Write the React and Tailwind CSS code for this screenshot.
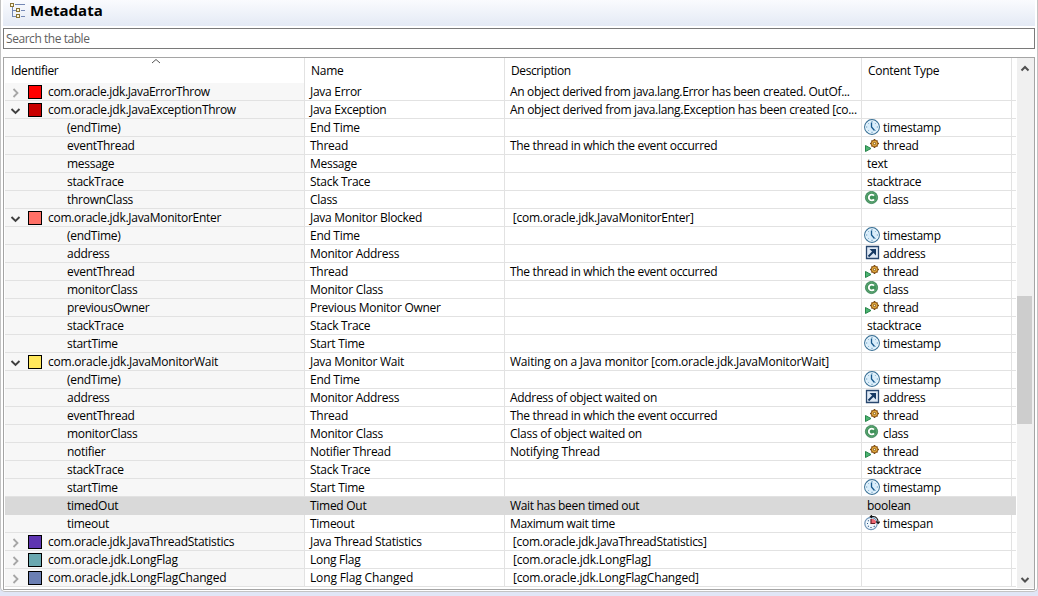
import React from 'react';

const rows = [
  { color: '#ff0000', id: 'com.oracle.jdk.JavaErrorThrow', idTracking: 'tracking-[-0.32px]', name: 'Java Error', desc: 'An object derived from java.lang.Error has been created. OutOf...', descTracking: 'tracking-[-0.34px]' },
  { color: '#c80000', open: true, id: 'com.oracle.jdk.JavaExceptionThrow', name: 'Java Exception', desc: 'An object derived from java.lang.Exception has been created [co...', descTracking: 'tracking-[-0.31px]' },
  { id: '(endTime)', name: 'End Time', type: 'timestamp' },
  { id: 'eventThread', name: 'Thread', desc: 'The thread in which the event occurred', descTracking: 'tracking-[-0.32px]', type: 'thread' },
  { id: 'message', name: 'Message', type: 'text' },
  { id: 'stackTrace', name: 'Stack Trace', type: 'stacktrace' },
  { id: 'thrownClass', name: 'Class', type: 'class' },
  { color: '#ff7066', open: true, id: 'com.oracle.jdk.JavaMonitorEnter', name: 'Java Monitor Blocked', desc: ' [com.oracle.jdk.JavaMonitorEnter]' },
  { id: '(endTime)', name: 'End Time', type: 'timestamp' },
  { id: 'address', name: 'Monitor Address', type: 'address' },
  { id: 'eventThread', name: 'Thread', desc: 'The thread in which the event occurred', descTracking: 'tracking-[-0.32px]', type: 'thread' },
  { id: 'monitorClass', name: 'Monitor Class', type: 'class' },
  { id: 'previousOwner', name: 'Previous Monitor Owner', type: 'thread' },
  { id: 'stackTrace', name: 'Stack Trace', type: 'stacktrace' },
  { id: 'startTime', name: 'Start Time', type: 'timestamp' },
  { color: '#ffe75c', open: true, id: 'com.oracle.jdk.JavaMonitorWait', idTracking: 'tracking-[-0.23px]', name: 'Java Monitor Wait', desc: 'Waiting on a Java monitor [com.oracle.jdk.JavaMonitorWait]', descTracking: 'tracking-[-0.21px]' },
  { id: '(endTime)', name: 'End Time', type: 'timestamp' },
  { id: 'address', name: 'Monitor Address', desc: 'Address of object waited on', descTracking: 'tracking-[-0.31px]', type: 'address' },
  { id: 'eventThread', name: 'Thread', desc: 'The thread in which the event occurred', descTracking: 'tracking-[-0.32px]', type: 'thread' },
  { id: 'monitorClass', name: 'Monitor Class', desc: 'Class of object waited on', type: 'class' },
  { id: 'notifier', name: 'Notifier Thread', desc: 'Notifying Thread', descTracking: 'tracking-[-0.21px]', type: 'thread' },
  { id: 'stackTrace', name: 'Stack Trace', type: 'stacktrace' },
  { id: 'startTime', name: 'Start Time', type: 'timestamp' },
  { id: 'timedOut', name: 'Timed Out', desc: 'Wait has been timed out', descTracking: 'tracking-[-0.33px]', type: 'boolean', selected: true },
  { id: 'timeout', name: 'Timeout', desc: 'Maximum wait time', descTracking: 'tracking-[-0.36px]', type: 'timespan' },
  { color: '#5e35b1', id: 'com.oracle.jdk.JavaThreadStatistics', name: 'Java Thread Statistics', desc: ' [com.oracle.jdk.JavaThreadStatistics]' },
  { color: '#6aa8b0', id: 'com.oracle.jdk.LongFlag', idTracking: 'tracking-[-0.19px]', name: 'Long Flag', desc: ' [com.oracle.jdk.LongFlag]', descTracking: 'tracking-[-0.16px]' },
  { color: '#6b7fb3', id: 'com.oracle.jdk.LongFlagChanged', idTracking: 'tracking-[-0.18px]', name: 'Long Flag Changed', nameTracking: 'tracking-[-0.14px]', desc: ' [com.oracle.jdk.LongFlagChanged]', descTracking: 'tracking-[-0.18px]' },
];

function TreeIcon() {
  return (
    <svg className="h-[18px] w-4 shrink-0" viewBox="0 0 16 18" fill="none" shapeRendering="crispEdges">
      <path d="M2.500 4v11M2.500 8.500h4M2.500 14.500h4M5 2.500h10M11 8.500h4M11 14.500h4" stroke="#7488b5" />
      <g fill="#fdf6d8" stroke="#8a7434">
        <path d="M.5 1.500h3v3h-3zM6.500 6.500h3v3h-3zM6.500 12.500h3v3h-3z" />
      </g>
    </svg>
  );
}

function ClockIcon() {
  return (
    <svg className="h-4 w-4" viewBox="0 0 16 16" fill="none">
      <circle cx="8" cy="8" r="7.400" fill="#d9edfa" stroke="#3a7095" strokeWidth="1.100" />
      <circle cx="8" cy="8" r="6.200" stroke="#f3faff" strokeWidth=".8" />
      <path d="M8 2v1.200M8 12.800V14M2 8h1.200M12.800 8H14M3.800 3.800l.8.8M11.400 11.400l.8.8M3.800 12.200l.8-.8M11.400 4.600l.8-.8" stroke="#639bc0" />
      <path d="M7.500 3.500V8l3 3.500" stroke="#17588c" strokeWidth="1.300" />
    </svg>
  );
}

function ThreadIcon() {
  return (
    <svg className="h-4 w-4" viewBox="0 0 16 16" fill="none">
      <path d="M1.500 8.500v6L7 11.500z" fill="#4cb572" stroke="#27854a" />
      <path d="M10.500 2v9M6 6.500h9M7.500 3.500l6 6M13.500 3.500l-6 6" stroke="#754713" strokeWidth="1.700" />
      <circle cx="10.500" cy="6.500" r="3.200" fill="#efb640" stroke="#80480f" strokeWidth=".9" />
      <circle cx="10.500" cy="6.500" r="1.200" fill="#fff3cf" stroke="#754713" strokeWidth=".9" />
    </svg>
  );
}

function ClassIcon() {
  return (
    <svg className="h-4 w-4" viewBox="0 0 16 16" fill="none">
      <circle cx="7.500" cy="6.500" r="6.100" fill="#3f9159" stroke="#348052" strokeWidth=".8" />
      <circle cx="7.500" cy="6.500" r="5" stroke="#7bb68a" strokeWidth=".5" />
      <path d="M10 4.700A2.900 2.900 0 1 0 10 8.300" stroke="#fff" strokeWidth="1.900" />
    </svg>
  );
}

function AddressIcon() {
  return (
    <svg className="h-4 w-4" viewBox="0 0 16 16" fill="none">
      <path d="M2.500 1.500h12v12h-12z" fill="#dfe9f5" stroke="#28476f" strokeWidth="1.300" />
      <path d="M4.500 11.500L10 6" stroke="#173963" strokeWidth="2" />
      <path d="M5.500 4H12V10.500z" fill="#173963" />
    </svg>
  );
}

function TimespanIcon() {
  return (
    <svg className="h-4 w-4" viewBox="0 0 16 16" fill="none">
      <circle cx="7" cy="8.500" r="6.200" fill="#f0f7fd" stroke="#7195b8" strokeWidth="1.200" />
      <path d="M7 8.500V4h2.500L12 6v2.500z" fill="#ee6873" />
      <path d="M7 4v4.500h4" stroke="#6b1b24" strokeWidth="1.200" />
      <path d="M3 8.500h1M7 12v1M4 5.500l.7.700M4 11.500l.7-.7M9.800 11l.8.700" stroke="#315b85" strokeWidth="1.200" />
      <path d="M6.500 1.500h3c2.800.3 4.500 2.500 4.700 6M8 .2l-1.700 1.300L8 3M12.200 6.500l2 2 1.600-2" stroke="#161616" strokeWidth="1.100" />
    </svg>
  );
}

const icons = { timestamp: ClockIcon, thread: ThreadIcon, class: ClassIcon, address: AddressIcon, timespan: TimespanIcon };

function Expander({ open }) {
  return (
    <svg className="mt-[2px] h-4 w-4 shrink-0" viewBox="0 0 16 16" fill="none">
      {open ? (
        <path d="M4.500 6l4 4 4-4" stroke="#404040" strokeWidth="1.900" />
      ) : (
        <path d="M6.500 4l4 4-4 4" stroke="#a6a6a6" strokeWidth="1.800" />
      )}
    </svg>
  );
}

function Row({ row }) {
  const Icon = icons[row.type];
  const line = row.selected ? 'border-[#d9d9d9]' : 'border-[#e2e2e2]';
  return (
    <div className={`flex h-[18px] whitespace-pre border-b leading-[18px] ${line} ${row.selected ? 'bg-[#d9d9d9]' : 'bg-white'}`}>
      <div className={`flex w-[300px] shrink-0 border-r ${line} ${row.selected ? '' : 'bg-[#f7f7f7]'}`}>
        {row.color ? (
          <div className="flex pl-[2px]">
            <Expander open={row.open} />
            <span className="ml-[5px] mt-[2px] h-[14px] w-[14px] shrink-0 border border-black" style={{ backgroundColor: row.color }} />
            <span className={`ml-[6px] ${row.idTracking || 'tracking-[-0.28px]'}`}>{row.id}</span>
          </div>
        ) : (
          <span className="pl-[62px]">{row.id}</span>
        )}
      </div>
      <div className={`w-[200px] shrink-0 border-r pl-[5px] ${line} ${row.nameTracking || 'tracking-[-0.28px]'}`}>{row.name}</div>
      <div className={`w-[357px] shrink-0 border-r pl-[5px] ${line} ${row.descTracking || 'tracking-[-0.27px]'}`}>{row.desc}</div>
      <div className={`flex w-[150px] shrink-0 border-r ${line}`}>
        {Icon ? (
          <>
            <span className="ml-[2px] h-4 w-4"><Icon /></span>
            <span className="ml-[3px]">{row.type}</span>
          </>
        ) : (
          <span className="pl-[5px]">{row.type}</span>
        )}
      </div>
    </div>
  );
}

export default function App() {
  return (
    <div className="h-[596px] w-[1038px] overflow-hidden bg-[#e1e6f6] font-['Open_Sans','Noto_Sans',sans-serif] text-[12px] tracking-[-0.28px] text-black">
      <div className="flex h-[592px] flex-col rounded-b-[5px] border-x border-b border-[#c3c3c3] bg-white px-[2px]">
        <header className="flex h-[26px] shrink-0 items-start bg-gradient-to-b from-[#fafbfe] to-[#e4eaf5] pl-[7px]">
          <div className="pt-[2px]"><TreeIcon /></div>
          <h1 className="ml-[4px] text-[15px] font-bold leading-[21px] tracking-[0px]">Metadata</h1>
        </header>
        <input
          className="mt-[2px] h-[21px] w-[1032px] shrink-0 border border-[#7a7a7a] bg-white pl-[2px] leading-[19px] tracking-[-0.45px] outline-none placeholder:text-[#5f5f5f]"
          placeholder="Search the table"
        />
        <div className="mt-[8px] flex h-[533px] w-[1032px] shrink-0 border border-[#a5a5a5] pl-px pr-px">
          <div className="mr-px w-[1011px] shrink-0">
            <div className="flex h-[25px] leading-[26px]">
              <div className="w-[300px] shrink-0 border-r border-[#e2e2e2] pl-[6px]">
                <div className="relative tracking-[-0.34px]">
                  Identifier
                  <svg className="absolute left-[140px] top-0 h-[6px] w-[10px]" viewBox="0 0 10 6" fill="none">
                    <path d="M1 5l4-3.500L9 5" stroke="#555" />
                  </svg>
                </div>
              </div>
              <div className="w-[200px] shrink-0 border-r border-[#e2e2e2] pl-[6px]">Name</div>
              <div className="w-[357px] shrink-0 border-r border-[#e2e2e2] pl-[6px] tracking-[-0.4px]">Description</div>
              <div className="w-[150px] shrink-0 border-r border-[#e2e2e2] pl-[6px]">Content Type</div>
            </div>
            {rows.map((row, i) => <Row key={i} row={row} />)}
          </div>
          <div className="flex h-[530px] flex-1 flex-col items-center bg-[#f0f0f0]">
            <svg className="h-[18px] w-[17px] shrink-0" viewBox="0 0 17 18" fill="none">
              <path d="M4.500 12.500L8 9l3.500 3.500" stroke="#505050" strokeWidth="2" />
            </svg>
            <div className="mt-[220px] h-[128px] w-[15px] shrink-0 self-start bg-[#cdcdcd]" />
            <svg className="mt-auto h-[18px] w-[17px] shrink-0" viewBox="0 0 17 18" fill="none">
              <path d="M4.500 8L8 11.500 11.500 8" stroke="#505050" strokeWidth="2" />
            </svg>
          </div>
        </div>
      </div>
    </div>
  );
}
